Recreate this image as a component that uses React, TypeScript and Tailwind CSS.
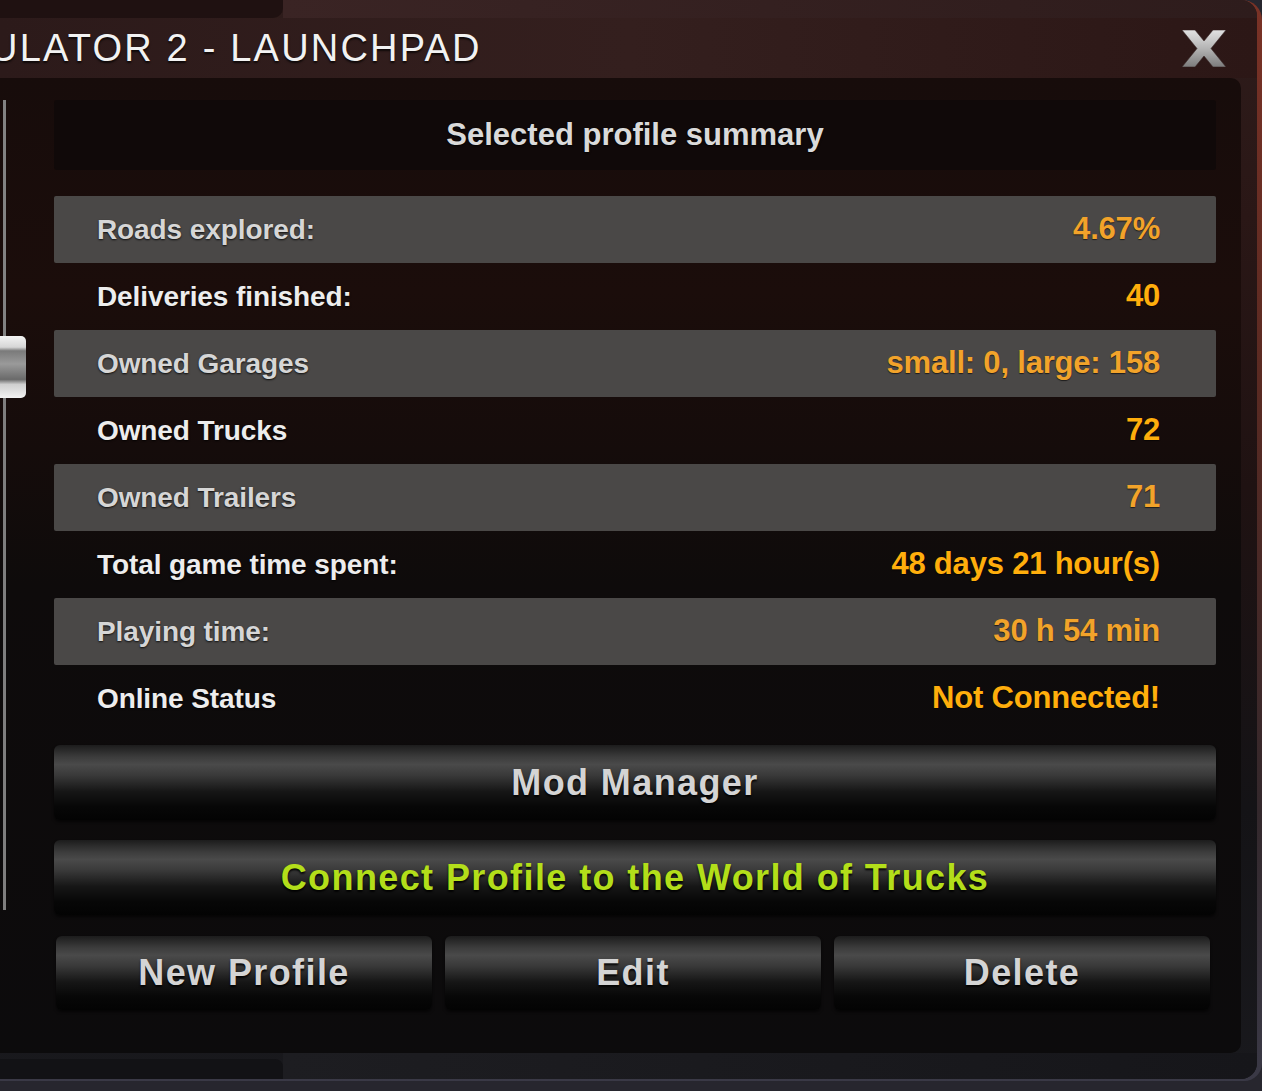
import React from 'react';

interface StatRow {
    label: string;
    value: string;
    shaded: boolean;
}

const rows: StatRow[] = [
    { label: 'Roads explored:', value: '4.67%', shaded: true },
    { label: 'Deliveries finished:', value: '40', shaded: false },
    { label: 'Owned Garages', value: 'small: 0, large: 158', shaded: true },
    { label: 'Owned Trucks', value: '72', shaded: false },
    { label: 'Owned Trailers', value: '71', shaded: true },
    { label: 'Total game time spent:', value: '48 days 21 hour(s)', shaded: false },
    { label: 'Playing time:', value: '30 h 54 min', shaded: true },
    { label: 'Online Status', value: 'Not Connected!', shaded: false },
];

const btnBg =
    'rounded-[6px] bg-[linear-gradient(to_bottom,#1c1c1c_0%,#3c3c3c_16%,#4a4a4a_26%,#3a3a3a_40%,#161616_62%,#070707_82%,#030303_100%)] shadow-[0_2px_3px_rgba(0,0,0,0.6)]';

const btnText = 'text-[36px] font-bold tracking-[1.4px] [text-shadow:0_2px_2px_rgba(0,0,0,0.9)]';

const CloseIcon = () => (
    <svg width="46" height="37" viewBox="0 0 46 37">
        <defs>
            <linearGradient id="xg" x1="0" y1="0" x2="0" y2="1">
                <stop offset="0" stopColor="#e2e2e2" />
                <stop offset="0.5" stopColor="#b4b4b4" />
                <stop offset="1" stopColor="#7c7c7c" />
            </linearGradient>
        </defs>
        <polygon
            points="1,0 14,0 23,11 32,0 45,0 30,18.5 45,37 32,37 23,26 14,37 1,37 16,18.5"
            fill="url(#xg)"
            stroke="#3a2a2a"
            strokeWidth="0.6"
        />
    </svg>
);

export default function App() {
    return (
        <div className="w-[1262px] h-[1091px] overflow-hidden bg-[#27262e] font-['Liberation_Sans',Arial,sans-serif]">
            {/* Outer frame border */}
            <div className="h-[1081px] pr-[5px] pb-[2px] rounded-tr-[20px] rounded-br-[18px] bg-[linear-gradient(to_bottom,#7a3226_0%,#5a2a22_35%,#33282c_75%,#3a3946_100%)]">
                <div className="h-full flex flex-col rounded-tr-[16px] rounded-br-[16px] bg-[linear-gradient(to_bottom,#2e1c1b_0%,#2a1716_20%,#1f1212_45%,#141316_75%,#19191d_100%)]">
                    {/* Top tab strip */}
                    <div className="h-[18px] flex">
                        <div className="w-[283px] h-full bg-[#1f1111] rounded-br-[10px]" />
                        <div className="flex-1 bg-[linear-gradient(to_right,#3a2424,#2e1c1c)] rounded-tr-[16px]" />
                    </div>

                    {/* Title bar */}
                    <div className="h-[60px] flex items-center justify-between pr-[30px] bg-[linear-gradient(to_right,#2c1a1a,#341f1e_50%,#2c1716)]">
                        <div className="ml-[-10px] text-[38px] leading-none tracking-[2.2px] text-[#f2f2f2] [text-shadow:0_2px_2px_rgba(0,0,0,0.7)] whitespace-nowrap">
                            ULATOR 2 - LAUNCHPAD
                        </div>
                        <CloseIcon />
                    </div>

                    {/* Inner panel */}
                    <div className="h-[975px] mr-[16px] flex rounded-tr-[10px] rounded-br-[10px] bg-[linear-gradient(to_bottom,#170c0b_0%,#1b0d0b_22%,#150c0b_38%,#0e0b0b_52%,#0c0b0c_100%)]">
                        {/* Scrollbar */}
                        <div className="w-[54px] flex flex-col items-start pt-[22px]">
                            <div className="ml-[3px] w-[3px] h-[236px] bg-[#828282]" />
                            <div className="w-[26px] h-[62px] rounded-r-[5px] bg-[linear-gradient(to_bottom,#f4f4f4_0%,#d6d6d6_18%,#7a7a7a_24%,#9a9a9a_45%,#6a6a6a_70%,#cfcfcf_78%,#f2f2f2_100%)]" />
                            <div className="ml-[3px] w-[3px] h-[512px] bg-[#7e7e7e]" />
                        </div>

                        {/* Content */}
                        <div className="w-[1162px] flex flex-col pt-[22px]">
                            <div className="h-[70px] flex items-center justify-center bg-[#100909] rounded-[3px]">
                                <span className="text-[31px] font-bold text-[#dadada] [text-shadow:0_1px_2px_rgba(0,0,0,0.9)]">
                                    Selected profile summary
                                </span>
                            </div>

                            <div className="mt-[26px] flex flex-col">
                                {rows.map((r) => (
                                    <div
                                        key={r.label}
                                        className={`h-[67px] flex items-center justify-between pl-[43px] pr-[56px] rounded-[2px] ${r.shaded ? 'bg-[#4a4847]' : ''}`}
                                    >
                                        <span
                                            className={`text-[28px] font-bold tracking-[-0.1px] [text-shadow:0_1px_2px_rgba(0,0,0,0.8)] ${r.shaded ? 'text-[#d6d6d6]' : 'text-[#ededed]'}`}
                                        >
                                            {r.label}
                                        </span>
                                        <span
                                            className={`text-[31px] font-bold tracking-[-0.2px] [text-shadow:0_1px_1px_rgba(0,0,0,0.6)] ${r.shaded ? 'text-[#f2a32a]' : 'text-[#ffae0c]'}`}
                                        >
                                            {r.value}
                                        </span>
                                    </div>
                                ))}
                            </div>

                            <div className={`mt-[13px] h-[75px] flex items-center justify-center ${btnBg}`}>
                                <span className={`${btnText} text-[#d4d4d4]`}>Mod Manager</span>
                            </div>

                            <div className={`mt-[20px] h-[75px] flex items-center justify-center ${btnBg}`}>
                                <span className={`${btnText} text-[#b3de1a]`}>Connect Profile to the World of Trucks</span>
                            </div>

                            <div className="mt-[21px] ml-[2px] w-[1154px] grid grid-cols-3 gap-[13px]">
                                {['New Profile', 'Edit', 'Delete'].map((t) => (
                                    <div key={t} className={`h-[74px] flex items-center justify-center ${btnBg}`}>
                                        <span className={`${btnText} text-[#d4d4d4]`}>{t}</span>
                                    </div>
                                ))}
                            </div>
                        </div>
                    </div>

                    {/* Bottom tab strip */}
                    <div className="flex-1 flex items-end">
                        <div className="w-[283px] h-[20px] bg-[#121215] rounded-tr-[8px]" />
                        <div className="flex-1 h-full bg-[linear-gradient(to_right,#1d1d21,#16161a)] rounded-br-[16px]" />
                    </div>
                </div>
            </div>
        </div>
    );
}
